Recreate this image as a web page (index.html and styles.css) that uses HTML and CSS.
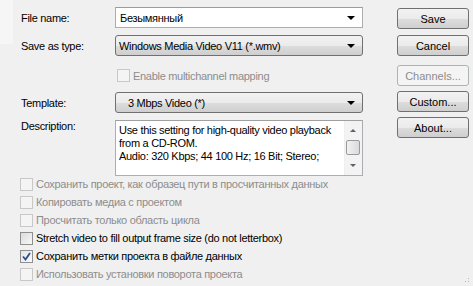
FILE: index.html
```html
<!DOCTYPE html>
<html lang="en">
<head>
    <meta charset="UTF-8">
    <title>Render As</title>
    <link rel="stylesheet" href="styles.css">
</head>
<body>
    <div class="dialog">
        <div class="corner"></div>
        <div class="top">
            <div class="form">
                <div class="row">
                    <label class="label">File name:</label>
                    <div class="combo edit">
                        <span class="value">Безымянный</span>
                        <span class="arrow"></span>
                    </div>
                </div>
                <div class="row">
                    <label class="label">Save as type:</label>
                    <div class="combo list">
                        <span class="value">Windows Media Video V11 (*.wmv)</span>
                        <span class="arrow"></span>
                    </div>
                </div>
                <div class="row check-row">
                    <span class="label"></span>
                    <div class="check disabled"><span class="box"></span>Enable multichannel mapping</div>
                </div>
                <div class="row">
                    <label class="label">Template:</label>
                    <div class="combo list">
                        <span class="value template">3 Mbps Video (*)</span>
                        <span class="arrow"></span>
                    </div>
                </div>
                <div class="row desc-row">
                    <label class="label">Description:</label>
                    <div class="desc">
                        <div class="desc-text">Use this setting for high-quality video playback<br>from a CD-ROM.<br>Audio: 320 Kbps; 44 100 Hz; 16 Bit; Stereo;</div>
                        <div class="scroll">
                            <span class="up"></span>
                            <span class="thumb"></span>
                            <span class="down"></span>
                        </div>
                    </div>
                </div>
            </div>
            <div class="buttons">
                <button class="btn">Save</button>
                <button class="btn cancel">Cancel</button>
                <button class="btn disabled gap">Channels...</button>
                <button class="btn">Custom...</button>
                <button class="btn">About...</button>
            </div>
        </div>
        <div class="options">
            <div class="check disabled"><span class="box"></span>Сохранить проект, как образец пути в просчитанных данных</div>
            <div class="check disabled"><span class="box"></span>Копировать медиа с проектом</div>
            <div class="check disabled"><span class="box"></span>Просчитать только область цикла</div>
            <div class="check"><span class="box"></span>Stretch video to fill output frame size (do not letterbox)</div>
            <div class="check"><span class="box checked"><svg width="9" height="9" viewBox="0 0 9 9"><path d="M1 4.5 L3.5 7.5 L8 1" fill="none" stroke="#2b4e94" stroke-width="1.8"/></svg></span>Сохранить метки проекта в файле данных</div>
            <div class="check disabled"><span class="box"></span>Использовать установки поворота проекта</div>
        </div>
        <div class="grip"></div>
    </div>
</body>
</html>
```

FILE: styles.css
```css
body {
    margin: 0;
    background: #f0f0f0;
    font-family: "Liberation Sans", Arial, sans-serif;
    font-size: 11px;
    letter-spacing: -0.3px;
    color: #000;
}

.dialog {
    position: relative;
    width: 473px;
    height: 286px;
    overflow: hidden;
}

.corner {
    position: absolute;
    left: 0;
    top: 0;
    width: 13px;
    height: 44px;
    background: #f6f6f6;
}

.top {
    position: relative;
    display: flex;
    padding-top: 7px;
}

.form {
    flex: 0 0 363px;
    box-sizing: border-box;
    padding-left: 21px;
}

.row {
    display: flex;
    align-items: center;
    margin-bottom: 7px;
}

.label {
    flex: 0 0 94px;
}

.combo {
    position: relative;
    display: flex;
    align-items: center;
    width: 248px;
    height: 21px;
    box-sizing: border-box;
}

.combo.edit {
    background: #fff;
    border: 1px solid #abadb3;
    border-top-color: #9c9c9c;
    padding-left: 4px;
}

.combo.list {
    background: linear-gradient(#f2f2f2 0%, #ebebeb 50%, #dddddd 51%, #cfcfcf 100%);
    border: 1px solid #707070;
    border-radius: 3px;
    padding-left: 3px;
}

.value.template {
    padding-left: 9px;
}

.arrow {
    position: absolute;
    right: 7px;
    top: 8px;
    border-left: 4px solid transparent;
    border-right: 4px solid transparent;
    border-top: 4px solid #000;
}

.check-row {
    height: 13px;
    margin: 13px 0 10px;
}

.check {
    display: flex;
    align-items: center;
    height: 18px;
    white-space: nowrap;
}

.check-row .check {
    margin-left: 2px;
}

.check.disabled {
    color: #8d8d8d;
}

.box {
    display: flex;
    align-items: center;
    justify-content: center;
    width: 13px;
    height: 13px;
    box-sizing: border-box;
    border: 1px solid #8f8f8f;
    background: linear-gradient(135deg, #dcdcdc, #f8f8f8);
    margin-right: 3px;
}

.check.disabled .box {
    border-color: #c8c8c8;
    background: #f4f4f4;
}

.box.checked {
    background: linear-gradient(135deg, #e4e4e4, #fafafa);
}

.desc-row {
    align-items: flex-start;
    margin-bottom: 0;
}

.desc {
    display: flex;
    width: 248px;
    height: 56px;
    box-sizing: border-box;
    background: #fff;
    border: 1px solid #abadb3;
    border-top-color: #a0a0a0;
}

.desc-text {
    flex: 1;
    padding: 3px 0 0 3px;
    line-height: 13px;
    white-space: nowrap;
}

.scroll {
    position: relative;
    flex: 0 0 17px;
    border-left: 1px solid #efefef;
    background: #f3f3f3;
}

.scroll .up,
.scroll .down {
    position: absolute;
    left: 5px;
    border-left: 3px solid transparent;
    border-right: 3px solid transparent;
}

.scroll .up {
    top: 8px;
    border-bottom: 3px solid #606060;
}

.scroll .down {
    bottom: 8px;
    border-top: 3px solid #606060;
}

.scroll .thumb {
    position: absolute;
    left: 1px;
    top: 19px;
    width: 14px;
    height: 15px;
    box-sizing: border-box;
    border: 1px solid #9a9a9a;
    border-radius: 2px;
    background: linear-gradient(90deg, #f2f2f2, #dadada);
}

.buttons {
    display: flex;
    flex-direction: column;
    flex-shrink: 0;
    gap: 5px;
    margin-left: 34px;
    padding-top: 1px;
}

.btn {
    width: 72px;
    height: 21px;
    font: inherit;
    color: #000;
    padding: 0;
    border: 1px solid #707070;
    border-radius: 3px;
    background: linear-gradient(#f2f2f2 0%, #ebebeb 50%, #dddddd 51%, #cfcfcf 100%);
}

.btn.disabled {
    color: #8d8d8d;
    border-color: #adb2b5;
    background: #f4f4f4;
}

.btn.cancel {
    margin-top: 1px;
}

.btn.gap {
    margin-top: 4px;
}

.options {
    margin-top: -1px;
    padding-left: 20px;
}

.grip {
    position: absolute;
    right: 2px;
    bottom: 2px;
    width: 10px;
    height: 10px;
    background: radial-gradient(circle, #b8b8b8 0.8px, transparent 1px) 0 0 / 3px 3px;
    clip-path: polygon(100% 0, 100% 100%, 0 100%);
}
```
